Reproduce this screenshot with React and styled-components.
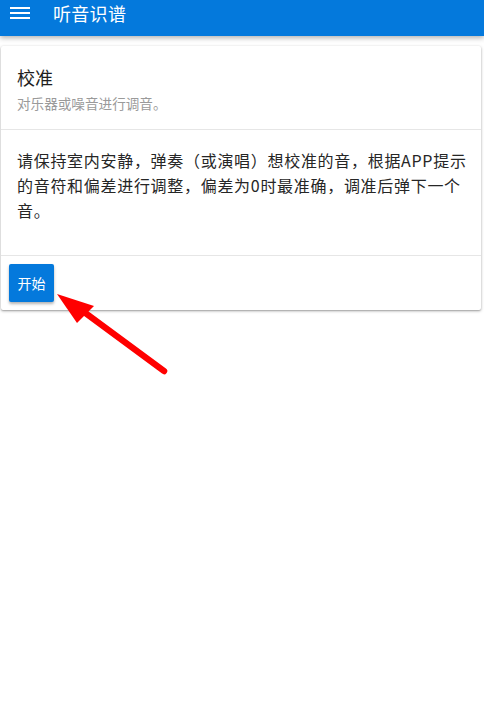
import React from "react";
import styled, { createGlobalStyle } from "styled-components";

const GlobalStyle = createGlobalStyle`
  html, body {
    margin: 0;
    padding: 0;
    background: #ffffff;
  }
  body {
    font-family: "Noto Sans CJK SC", "Noto Sans", Roboto, sans-serif;
    width: 484px;
    height: 710px;
    overflow: hidden;
  }
`;

const Page = styled.div`
  position: relative;
  width: 484px;
  height: 710px;
  background: #fff;
`;

const AppBar = styled.header`
  height: 36px;
  background: #0479dc;
  display: flex;
  align-items: center;
  box-shadow: 0 2px 5px rgba(0, 0, 0, 0.3);
  position: relative;
  z-index: 2;
`;

const MenuButton = styled.div`
  width: 20px;
  height: 12px;
  margin: -11px 0 0 10px;
  display: flex;
  flex-direction: column;
  justify-content: space-between;
`;

const MenuLine = styled.span`
  display: block;
  height: 2px;
  background: #fff;
`;

const Title = styled.h1`
  margin: -11px 0 0 23px;
  font-size: 18px;
  font-weight: 400;
  color: #fff;
  letter-spacing: 0.3px;
  line-height: 24px;
`;

const Content = styled.main`
  padding: 10px 3px 0 1px;
`;

const Card = styled.section`
  background: #fff;
  border-radius: 2px;
  box-shadow: 0 1px 3px rgba(0, 0, 0, 0.35), 0 1px 1px rgba(0, 0, 0, 0.1);
`;

const CardHead = styled.div`
  padding: 19px 16px 16px;
  border-bottom: 1px solid #e6e6e6;
`;

const CardTitle = styled.div`
  font-size: 18px;
  line-height: 24px;
  color: #1e1e1e;
`;

const CardSubtitle = styled.div`
  margin-top: 4px;
  font-size: 13.6px;
  line-height: 20px;
  color: #9a9a9a;
`;

const CardBody = styled.div`
  padding: 18px 10px 32px 16px;
  font-size: 16px;
  letter-spacing: 0.7px;
  line-height: 25px;
  color: #262626;
  border-bottom: 1px solid #e6e6e6;
`;

const CardActions = styled.div`
  padding: 8px;
  display: flex;
`;

const Button = styled.button`
  height: 38px;
  padding: 0 8px;
  min-width: 45px;
  border: none;
  border-radius: 2px;
  background: #0479dc;
  color: #fff;
  font-family: inherit;
  font-size: 14px;
  box-shadow: 0 2px 3px rgba(0, 0, 0, 0.3);
`;

const Pointer = styled.svg`
  position: absolute;
  left: 0;
  top: 0;
  pointer-events: none;
`;

function Arrow() {
  return (
    <Pointer width="484" height="710" viewBox="0 0 484 710">
      <line x1="164" y1="371" x2="84" y2="312" stroke="#ff0000" strokeWidth="6.5" strokeLinecap="round" />
      <polygon points="57,294 94,306 77,323" fill="#ff0000" />
    </Pointer>
  );
}

export default function App() {
  return (
    <Page>
      <GlobalStyle />
      <AppBar>
        <MenuButton>
          <MenuLine />
          <MenuLine />
          <MenuLine />
        </MenuButton>
        <Title>听音识谱</Title>
      </AppBar>
      <Content>
        <Card>
          <CardHead>
            <CardTitle>校准</CardTitle>
            <CardSubtitle>对乐器或噪音进行调音。</CardSubtitle>
          </CardHead>
          <CardBody>
            请保持室内安静，弹奏（或演唱）想校准的音，根据APP提示的音符和偏差进行调整，偏差为0时最准确，调准后弹下一个音。
          </CardBody>
          <CardActions>
            <Button>开始</Button>
          </CardActions>
        </Card>
      </Content>
      <Arrow />
    </Page>
  );
}
